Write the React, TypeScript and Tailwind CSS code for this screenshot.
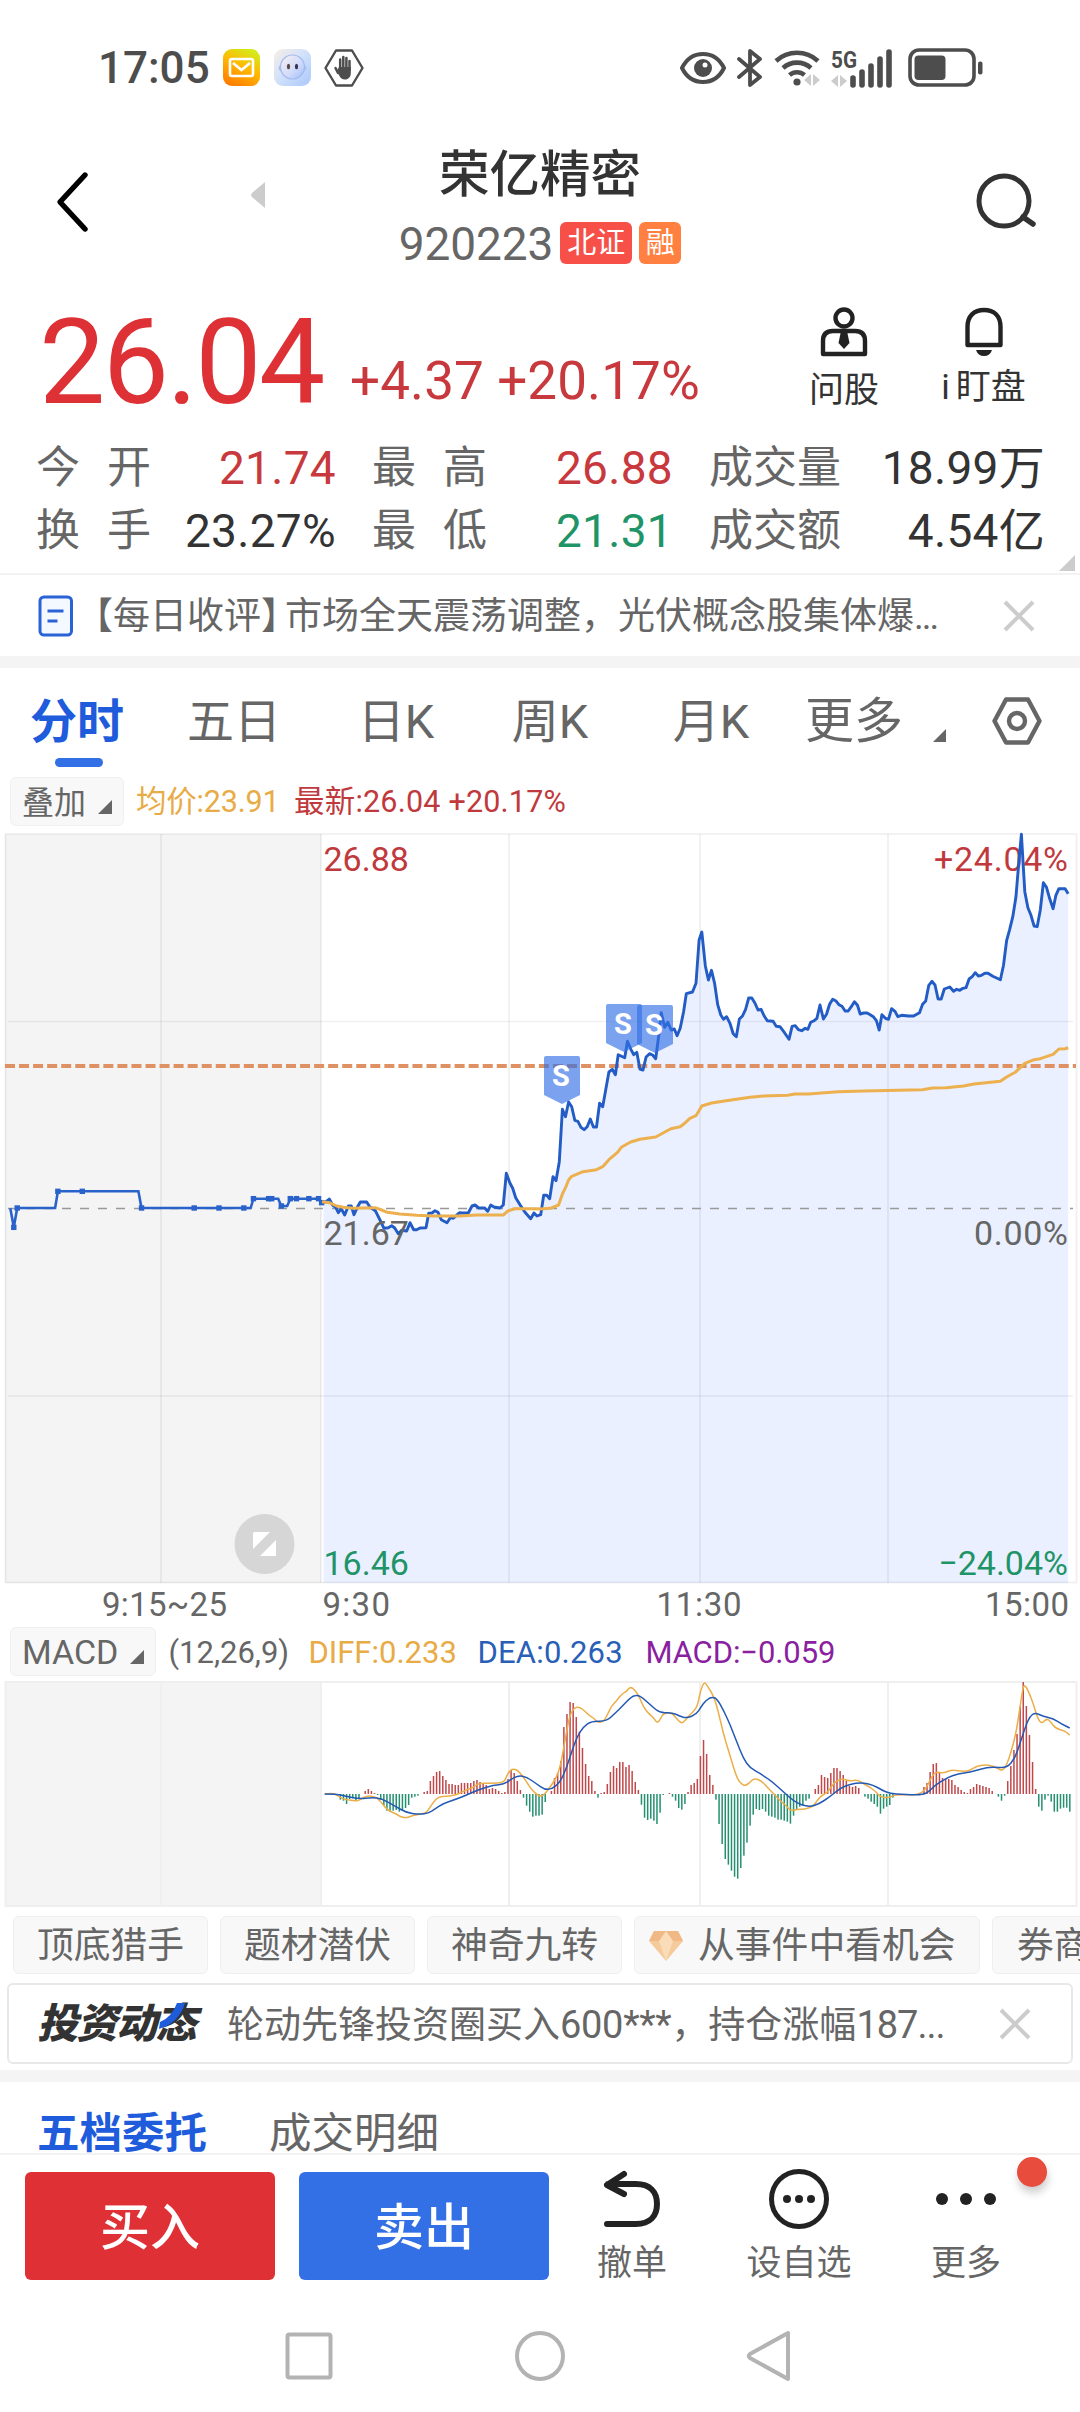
import type { ReactNode } from "react";

type Point = [number, number];

const place = (data: Point[], x0: number, y0: number, kx: number, ky: number): Point[] =>
  data.map(([x, y]) => [x0 + x / kx, y0 + y / ky]);

const line = (pts: Point[]) =>
  pts.map(([x, y], i) => `${i ? "L" : "M"}${x.toFixed(1)} ${y.toFixed(1)}`).join("");

// Quadratic curve through the midpoints
const smooth = (pts: Point[]) => {
  let d = `M${pts[0][0]} ${pts[0][1]}`;
  for (let i = 1; i < pts.length - 1; i++) {
    const mx = (pts[i][0] + pts[i + 1][0]) / 2;
    const my = (pts[i][1] + pts[i + 1][1]) / 2;
    d += `Q${pts[i][0].toFixed(1)} ${pts[i][1].toFixed(1)} ${mx.toFixed(1)} ${my.toFixed(1)}`;
  }
  const last = pts[pts.length - 1];
  return `${d}L${last[0].toFixed(1)} ${last[1].toFixed(1)}`;
};

const auction = place(
  [
    [30, 1165], [40, 1222], [50, 1164], [160, 1164], [168, 1114], [402, 1114], [411, 1164], [728, 1164],
    [736, 1136], [808, 1136], [817, 1158], [834, 1158], [843, 1136], [925, 1136], [934, 1148],
  ],
  0, 820, 2.904, 3
);

const auctionDots = place(
  [
    [40, 1222], [50, 1164], [168, 1114], [239, 1114], [411, 1164], [564, 1164], [636, 1164], [708, 1164],
    [736, 1136], [780, 1136], [789, 1136], [817, 1158], [843, 1136], [861, 1136], [897, 1136], [925, 1136], [934, 1148],
  ],
  0, 820, 2.904, 3
);

const price = [
  ...place(
    [
      [68, 248], [78, 245], [88, 237], [98, 256], [107, 262], [115, 278], [124, 266], [134, 285], [145, 258],
      [154, 258], [162, 284], [172, 262], [181, 246], [200, 246], [209, 260], [226, 272], [240, 300], [252, 325],
      [265, 323], [275, 317], [284, 324], [295, 341], [305, 331], [320, 333], [330, 308], [341, 329], [350, 329],
      [360, 324], [378, 323], [386, 280], [396, 279], [405, 272], [414, 277], [424, 299], [441, 308], [451, 293],
      [460, 295], [478, 278], [487, 279], [505, 279], [516, 258], [525, 255], [536, 264], [554, 264], [563, 274],
      [572, 255], [582, 261], [600, 264], [610, 255], [619, 160], [630, 190], [638, 205], [647, 233], [660, 254],
      [675, 277], [692, 296], [702, 279], [711, 288], [722, 284], [731, 226], [740, 226], [749, 236], [759, 170],
      [768, 182], [778, 125],
    ],
    300, 1120, 3, 3
  ),
  ...place(
    [
      [65, 868], [74, 890], [83, 846], [92, 860], [101, 901], [110, 904], [119, 922], [128, 929], [137, 920],
      [146, 897], [155, 921], [164, 921], [173, 850], [182, 860], [200, 756], [210, 748], [219, 764], [227, 704],
      [246, 713], [254, 664], [264, 688], [272, 704], [281, 697], [290, 747], [299, 750], [308, 711], [318, 701],
      [327, 705], [336, 716], [345, 645], [352, 578], [362, 622], [371, 607], [381, 630], [390, 627], [398, 647],
      [407, 625], [417, 575], [425, 521], [443, 516], [453, 490], [462, 360], [470, 336], [480, 437], [489, 480],
      [498, 451], [507, 490], [516, 554], [525, 585], [533, 598], [542, 590], [552, 611], [561, 641], [570, 650],
      [579, 597], [588, 588], [597, 568], [606, 534], [615, 534], [624, 549], [633, 570], [642, 568], [651, 588],
      [660, 602], [677, 604], [686, 619], [697, 620], [710, 638], [723, 658], [732, 619], [741, 617], [750, 629],
      [760, 632], [770, 625], [778, 628], [786, 607], [796, 602], [804, 595], [813, 555], [823, 597], [832, 583],
      [841, 553], [850, 538], [860, 543], [868, 554], [877, 559], [886, 573], [895, 573], [904, 560], [913, 545],
      [922, 556], [930, 582], [940, 579], [950, 579], [959, 584], [968, 590], [977, 602], [985, 630], [993, 584],
      [1003, 595], [1012, 598], [1021, 566], [1031, 574], [1039, 590], [1050, 586], [1070, 588], [1085, 588],
      [1102, 578], [1111, 553], [1120, 543], [1129, 496], [1138, 484], [1147, 495], [1156, 537], [1165, 537],
      [1174, 507], [1190, 501], [1201, 514], [1210, 508], [1219, 511], [1228, 505], [1237, 503], [1246, 477],
      [1255, 470], [1264, 458], [1273, 468], [1282, 466], [1292, 460], [1301, 460], [1315, 469], [1337, 479],
      [1346, 436], [1355, 362], [1364, 328], [1373, 290], [1382, 232], [1391, 120], [1398, 43], [1408, 215],
      [1417, 263], [1426, 286], [1435, 318], [1444, 320], [1453, 270], [1462, 188], [1471, 202], [1480, 235],
      [1490, 266], [1498, 227], [1507, 206], [1525, 206], [1534, 221],
    ],
    540, 820, 2.904, 3
  ),
];

const average = [
  ...place(
    [
      [66, 245], [88, 248], [110, 258], [130, 262], [160, 265], [225, 263], [245, 270], [262, 277], [300, 282],
      [350, 286], [400, 288], [480, 288], [530, 285], [610, 285], [625, 272], [645, 266], [690, 266],
    ],
    300, 1120, 3, 3
  ),
  ...place(
    [
      [0, 1167], [30, 1165], [54, 1155], [65, 1122], [74, 1103], [83, 1080], [92, 1069], [125, 1055], [164, 1049],
      [182, 1040], [200, 1019], [225, 997], [236, 982], [263, 966], [290, 958], [336, 951], [380, 926], [407, 920],
      [420, 910], [435, 895], [453, 887], [470, 858], [498, 849], [560, 839], [610, 832], [650, 828], [720, 826],
      [740, 822], [780, 822], [865, 815], [940, 813], [1040, 811], [1110, 809], [1140, 804], [1180, 803],
      [1230, 798], [1260, 792], [1337, 784], [1355, 771], [1380, 757], [1408, 730], [1435, 719], [1453, 716],
      [1490, 703], [1507, 687], [1525, 686], [1534, 683],
    ],
    540, 820, 2.904, 3
  ),
];

const macdBars = [
  0, 2, 0, -1, -3, -17, -20, -30, -15, -13, -20, -13, 0, 9, 15, 9, 3, -3, -17, -35, -50, -53, -50, -48, -53, -50,
  -42, -33, -11, -8, -5, 0, 6, 9, 39, 54, 66, 69, 54, 42, 30, 30, 27, 27, 33, 33, 33, 33, 39, 42, 36, 33, 27, 15,
  18, 15, 9, 3, 6, 45, 72, 63, 39, 12, -11, -35, -53, -68, -65, -65, -62, -24, 0, 9, 48, 63, 99, 201, 240, 276,
  273, 231, 187, 138, 90, 54, 39, 9, -11, 3, 6, 30, 66, 84, 78, 96, 96, 81, 87, 69, 36, 12, -32, -71, -78, -74,
  -80, -90, -56, -3, 0, 3, -8, -20, -42, -47, -30, 6, 27, 33, 45, 114, 162, 120, 57, 27, -17, -90, -150, -195,
  -212, -230, -248, -254, -222, -185, -146, -95, -62, -45, -48, -45, -53, -65, -68, -71, -77, -77, -80, -83, -89,
  -65, -45, -38, -35, -20, -14, 0, 15, 27, 57, 51, 48, 63, 78, 78, 69, 57, 40, 24, 21, 24, 18, 0, -8, -14, -23,
  -30, -38, -59, -44, -38, -33, -11, 0, 0, 0, 0, 0, 0, 0, 0, 0, 21, 33, 66, 90, 93, 66, 48, 45, 45, 42, 27, 21,
  12, 6, 3, 15, 21, 30, 27, 24, 21, 18, 9, 0, -8, -20, -5, 39, 84, 132, 180, 262, 336, 264, 177, 96, 15, -38,
  -50, -17, -5, -23, -53, -53, -44, -41, -41, -53,
];

const diff = [
  ...place(
    [
      [74, 372], [92, 369], [110, 374], [130, 388], [155, 390], [172, 394], [188, 384], [205, 377], [225, 380],
      [240, 392], [255, 412], [270, 424], [290, 432], [300, 440], [318, 444], [335, 438], [350, 434], [375, 430],
      [385, 420], [400, 397], [415, 380], [440, 379], [465, 376], [485, 367], [505, 357], [520, 352], [535, 340],
      [570, 340], [612, 338], [620, 318], [630, 301], [642, 296], [655, 302], [675, 328], [690, 352], [705, 370],
      [722, 380], [735, 372], [745, 357], [758, 340], [770, 320], [782, 285], [790, 240], [800, 182], [810, 135],
      [822, 114], [838, 110], [855, 124], [870, 138], [882, 145], [893, 158], [912, 154], [925, 128], [935, 108],
      [950, 92], [965, 72], [980, 64], [991, 50], [1005, 60], [1018, 80], [1030, 110], [1045, 130], [1060, 142],
      [1072, 160], [1082, 146], [1090, 130], [1115, 128], [1130, 146],
    ],
    300, 1670, 3, 3
  ),
  ...place(
    [
      [5, 161], [17, 150], [30, 134], [48, 117], [55, 95], [62, 60], [73, 34], [85, 52], [102, 80], [115, 125],
      [130, 190], [145, 240], [160, 290], [172, 326], [185, 343], [195, 347], [207, 340], [222, 324], [245, 333],
      [265, 355], [285, 375], [300, 392], [318, 406], [332, 423], [350, 418], [375, 418], [400, 408], [410, 394],
      [425, 376], [440, 370], [455, 348], [470, 332], [487, 326], [510, 334], [532, 329], [550, 341], [570, 352],
      [588, 365], [600, 381], [625, 384], [645, 374], [700, 375], [725, 370], [740, 352], [755, 320], [768, 305],
      [790, 310], [815, 299], [840, 304], [865, 304], [888, 289], [915, 284], [935, 287], [952, 294], [967, 303],
      [980, 285], [995, 240], [1010, 180], [1020, 110], [1030, 46], [1037, 48], [1048, 70], [1062, 108],
      [1072, 142], [1084, 162], [1100, 145], [1112, 155], [1127, 176], [1155, 182], [1169, 196],
    ],
    680, 1670, 3, 3
  ),
];

const dea = [
  ...place(
    [
      [74, 372], [110, 372], [140, 380], [180, 387], [215, 382], [245, 386], [280, 405], [320, 429], [360, 433],
      [385, 430], [405, 417], [430, 400], [470, 387], [500, 375], [540, 357], [580, 346], [612, 343], [630, 330],
      [655, 316], [680, 321], [710, 342], [735, 359], [755, 357], [780, 338], [800, 292], [815, 245], [830, 203],
      [850, 170], [875, 153], [920, 154], [945, 130], [970, 105], [995, 79], [1013, 75], [1030, 85], [1055, 108],
      [1080, 129], [1115, 127], [1140, 138],
    ],
    300, 1670, 3, 3
  ),
  ...place(
    [
      [20, 145], [50, 132], [62, 112], [78, 90], [98, 80], [112, 88], [130, 120], [150, 163], [170, 215],
      [190, 265], [210, 294], [245, 313], [280, 338], [310, 365], [340, 392], [365, 405], [390, 410], [415, 403],
      [450, 380], [480, 355], [510, 343], [545, 337], [580, 345], [605, 360], [630, 371], [670, 373], [715, 375],
      [740, 371], [765, 346], [800, 324], [835, 311], [870, 307], [905, 296], [935, 290], [980, 295], [1005, 265],
      [1020, 220], [1038, 165], [1050, 139], [1065, 128], [1090, 139], [1120, 146], [1145, 162], [1169, 174],
    ],
    680, 1670, 3, 3
  ),
];

const gridColumns = [161, 321, 509, 700, 888];

function StatusBar() {
  return (
    <div className="flex h-[135px] items-center pl-[98px] text-[#4d4d4d]">
      <span className="w-[125px] text-[44px] font-medium leading-none">17:05</span>
      <svg width="37" height="37" viewBox="0 0 37 37" className="shrink-0">
        <defs>
          <linearGradient id="mail" x1="0.2" y1="1" x2="0.7" y2="0">
            <stop offset="0" stopColor="#ff7a00" />
            <stop offset="0.55" stopColor="#ffb800" />
            <stop offset="1" stopColor="#d4ec1c" />
          </linearGradient>
        </defs>
        <rect width="37" height="37" rx="9" fill="url(#mail)" />
        <rect x="7" y="10" width="23" height="17" rx="2" fill="none" stroke="#fff" strokeWidth="2.6" />
        <path d="M10 14l8.500 7 8.500-7" fill="none" stroke="#fff" strokeWidth="2.600" />
      </svg>
      <svg width="37" height="37" viewBox="0 0 37 37" className="ml-[14px] shrink-0">
        <defs>
          <linearGradient id="bot" x1="0" y1="0" x2="1" y2="1">
            <stop offset="0" stopColor="#f8efe6" />
            <stop offset="0.5" stopColor="#cfe0fb" />
            <stop offset="1" stopColor="#a9c8fb" />
          </linearGradient>
          <linearGradient id="face" x1="0" y1="0" x2="1" y2="1">
            <stop offset="0" stopColor="#fbf1ee" />
            <stop offset="0.6" stopColor="#cfdafb" />
            <stop offset="1" stopColor="#9dbcf8" />
          </linearGradient>
        </defs>
        <rect width="37" height="37" rx="9" fill="url(#bot)" />
        <ellipse cx="18.500" cy="19" rx="14" ry="6" fill="#a9c0f2" />
        <circle cx="18.500" cy="18" r="12" fill="url(#face)" stroke="#a3b9f0" strokeWidth="1.200" />
        <ellipse cx="14.500" cy="17.500" rx="1.600" ry="2.800" fill="#5b4540" />
        <ellipse cx="22.500" cy="17.500" rx="1.600" ry="2.800" fill="#3b3550" />
      </svg>
      <svg width="40" height="38" viewBox="0 0 40 38" className="ml-[13px] shrink-0">
        <path d="M12 1.500h16l10.500 17.500L28 36.500H12L1.500 19z" fill="none" stroke="currentColor" strokeWidth="2.400" strokeLinejoin="round" />
        <path d="M16.200 20V10.500M19.300 19V8M22.400 19V9M25.500 21V12M14 24l-2.500-5" stroke="currentColor" strokeWidth="2.500" strokeLinecap="round" />
        <path d="M15 18h11.800v6.500c0 3.500-2.600 6-5.800 6-3 0-4.500-1.500-5.800-4l-2.400-4.500z" fill="currentColor" />
      </svg>
      <div className="ml-[316px] flex items-center">
        <svg width="46" height="32" viewBox="0 0 46 32">
          <path d="M2 16C7 6 14 2 23 2s16 4 21 14c-5 10-12 14-21 14S7 26 2 16z" fill="none" stroke="currentColor" strokeWidth="4" />
          <circle cx="23" cy="16" r="9" fill="currentColor" />
          <circle cx="25" cy="13" r="2.500" fill="#fff" />
        </svg>
        <svg width="28" height="38" viewBox="0 0 28 38" className="ml-[10px]">
          <path d="M3 10l21 18-10 8V2l10 8L3 28" fill="none" stroke="currentColor" strokeWidth="3.800" strokeLinejoin="round" strokeLinecap="round" />
        </svg>
        <svg width="48" height="39" viewBox="0 0 48 39" className="ml-[10px]">
          <path d="M2 13a31 31 0 0 1 42 0M9 20a21 21 0 0 1 28 0M15.500 27a11.500 11.500 0 0 1 15 0" fill="none" stroke="currentColor" strokeWidth="4.600" />
          <circle cx="23" cy="34" r="3.600" fill="currentColor" />
          <path d="M37 26v12l-7-6zM39 26v12l7-6z" fill="#ccc" />
        </svg>
        <svg width="64" height="40" viewBox="0 0 64 40" className="ml-[9px]">
          <text x="0" y="20" fontSize="24" fontWeight="700" fill="currentColor" textLength="26" lengthAdjust="spacingAndGlyphs">5G</text>
          <path d="M7 27v12l-7-6zM9 27v12l7-6z" fill="#ccc" />
          <path d="M22 30v7M31 24v13M40 18v19M49 11v26M58 4v33" stroke="currentColor" strokeWidth="5.600" strokeLinecap="round" />
        </svg>
        <svg width="76" height="40" viewBox="0 0 76 40" className="ml-[13px]">
          <rect x="2" y="2" width="64" height="35" rx="9" fill="none" stroke="currentColor" strokeWidth="3.600" />
          <rect x="6.500" y="7.500" width="31" height="24.500" rx="4" fill="currentColor" />
          <rect x="70" y="13.500" width="4.500" height="13" rx="2" fill="currentColor" />
        </svg>
      </div>
    </div>
  );
}

function Header() {
  return (
    <header className="flex h-[155px] items-start">
      <svg width="34" height="62" viewBox="0 0 34 62" className="ml-[55px] mt-[36px]">
        <path d="M30 4L5 31l25 27" fill="none" stroke="#000" strokeWidth="5.400" strokeLinecap="round" strokeLinejoin="round" />
      </svg>
      <svg width="15" height="26" viewBox="0 0 15 26" className="ml-[162px] mt-[47px]">
        <path d="M14 0v26L1 15q-2-2 0-4z" fill="#ccc" />
      </svg>
      <div className="ml-[114px] flex w-[320px] flex-col items-center">
        <h1 className="mt-[10px] text-[50.500px] font-medium leading-[60px] text-[#333]">荣亿精密</h1>
        <div className="mt-[13px] flex h-[50px] items-center gap-[7px]">
          <span className="pt-[2px] text-[46px] tracking-[-0.1px] text-[#666]">920223</span>
          <span className="flex h-[42px] w-[72px] items-center justify-center rounded-md bg-[#f65048] text-[29px] leading-none text-white">
            北证
          </span>
          <span className="flex h-[42px] w-[42px] items-center justify-center rounded-md bg-[#ff8040] text-[29px] leading-none text-white">
            融
          </span>
        </div>
      </div>
      <svg width="64" height="60" viewBox="0 0 64 60" className="ml-[275px] mt-[37px]">
        <circle cx="29" cy="29" r="25" fill="none" stroke="#333" strokeWidth="5" />
        <path d="M48 45l10 7" stroke="#333" strokeWidth="5.500" strokeLinecap="round" />
      </svg>
    </header>
  );
}

function Stat({ label, label2, value, tone }: { label: string; label2?: string; value: string; tone: string }) {
  return (
    <div className="flex pl-[36px]">
      <span>{label}</span>
      {label2 && <span className="ml-[27px]">{label2}</span>}
      <span className={`ml-auto text-[46px] tracking-[0.3px] whitespace-nowrap ${tone}`}>{value}</span>
    </div>
  );
}

function Quote() {
  return (
    <section className="h-[285px] border-b-2 border-[#f2f2f2]">
      <div className="flex h-[142px]">
        <div className="flex w-[770px] items-baseline pl-[39px] text-[#dd3135]">
          <span className="w-[311px] text-[118px] leading-[146px] tracking-[-2.5px]">26.04</span>
          <span className="relative -top-[4px] text-[53px] tracking-[0.1px] text-[#c8393d]">+4.37 +20.17%</span>
        </div>
        <div className="flex w-[148px] flex-col items-center pt-[17px]">
          <svg width="48" height="50" viewBox="0 0 48 50" className="shrink-0">
            <circle cx="24" cy="11" r="8.500" fill="none" stroke="#222" strokeWidth="4.400" />
            <path d="M3 47V34q0-10 10-10h22q10 0 10 10v13z" fill="none" stroke="#222" strokeWidth="4.400" strokeLinejoin="round" />
            <path d="M21 24h6l2.500 12-5.500 6-5.500-6z" fill="#222" />
          </svg>
          <span className="mt-[16px] text-[35px] leading-[36px] text-[#333]">问股</span>
        </div>
        <div className="flex w-[131px] flex-col items-center pt-[17px]">
          <svg width="42" height="50" viewBox="0 0 42 50" className="shrink-0">
            <path d="M4.500 38V20C4.500 9 11 3 21 3s16.500 6 16.500 17v18z" fill="none" stroke="#222" strokeWidth="4.400" strokeLinejoin="round" />
            <path d="M13 43h16q-2 6-8 6t-8-6z" fill="#222" />
          </svg>
          <span className="mt-[13px] text-[35px] leading-[36px] text-[#333]">
            <span className="mr-[6px]">i</span>盯盘
          </span>
        </div>
      </div>
      <div className="relative grid grid-cols-[336px_337px_372px] pt-[5px] text-[44px] leading-[63px] text-[#666]">
        <Stat label="今" label2="开" value="21.74" tone="text-[#c8393d]" />
        <Stat label="最" label2="高" value="26.88" tone="text-[#c8393d]" />
        <Stat label="成交量" value="18.99万" tone="text-[#333]" />
        <Stat label="换" label2="手" value="23.27%" tone="text-[#333]" />
        <Stat label="最" label2="低" value="21.31" tone="text-[#1f9467]" />
        <Stat label="成交额" value="4.54亿" tone="text-[#333]" />
        <svg width="16" height="16" viewBox="0 0 16 16" className="absolute right-[5px] bottom-[-8px]">
          <path d="M16 0v16H0z" fill="#ccc" />
        </svg>
      </div>
    </section>
  );
}

function Close() {
  return (
    <svg width="34" height="34" viewBox="0 0 34 34" className="shrink-0">
      <path d="M3 3l28 28M31 3L3 31" stroke="#ccc" strokeWidth="4" />
    </svg>
  );
}

function News() {
  return (
    <section className="flex h-[81px] items-center pl-[38px] text-[37px] text-[#666]">
      <svg width="36" height="42" viewBox="0 0 36 42" className="shrink-0">
        <rect x="2" y="2" width="31.500" height="38" rx="4" fill="#f4f8ff" stroke="#2a62d8" strokeWidth="3" />
        <path d="M9.500 16h16M9.500 26h10" stroke="#2a62d8" strokeWidth="3" />
      </svg>
      <p className="ml-[2px] w-[926px] pt-[1px] leading-none whitespace-nowrap">
        【每日收评<span className="tracking-[-13px]">】</span>市场全天震荡调整，光伏概念股集体爆
        <span className="tracking-[-2px]">...</span>
      </p>
      <Close />
    </section>
  );
}

function Tabs() {
  return (
    <nav className="flex h-[107px] text-[47px] leading-[108px] text-[#666]">
      <div className="flex w-[157px] flex-col items-center font-bold text-[#1e5cdb]">
        <span className="mr-[3px] h-[90px]">分时</span>
        <span className="h-[9px] w-[48px] rounded-full bg-[#3370e5]" />
      </div>
      <div className="w-[154px] text-center">五日</div>
      <div className="w-[170px] text-center">日K</div>
      <div className="w-[138px] text-center">周K</div>
      <div className="w-[184px] text-center">月K</div>
      <div className="flex w-[189px] pl-[2px]">
        <span className="w-[128px] text-[49px]">更多</span>
        <svg width="13" height="13" viewBox="0 0 13 13" className="mt-[61px]">
          <path d="M13 0v13H0z" fill="#666" />
        </svg>
      </div>
      <svg width="50" height="48" viewBox="0 0 50 48" className="mt-[29px]">
        <path d="M14 2.500h22L47.500 24 36 45.500H14L2.500 24z" fill="none" stroke="#666" strokeWidth="4.400" strokeLinejoin="round" />
        <circle cx="25" cy="24" r="8" fill="none" stroke="#666" strokeWidth="4.400" />
      </svg>
    </nav>
  );
}

function Picker({ children }: { children: ReactNode }) {
  return (
    <span className="flex h-[49px] items-center gap-[12px] rounded-md border border-[#f0f0f0] bg-[#f8f8f8] px-[11px] pt-[2px] text-[#666]">
      {children}
      <svg width="14" height="14" viewBox="0 0 14 14" className="mt-[9px]">
        <path d="M14 0v14H0z" fill="#666" />
      </svg>
    </span>
  );
}

function Flag({ x, y }: { x: number; y: number }) {
  return (
    <g>
      <path d={`M${x} ${y + 2}q0-2 2-2h32q2 0 2 2v37l-18 9-18-9z`} fill="#3370e5" opacity="0.65" />
      <text x={x + 17} y={y + 30} fontSize="29" fontWeight="700" textAnchor="middle" fill="#fff">S</text>
    </g>
  );
}

function PriceChart() {
  return (
    <svg width="1080" height="796" viewBox="0 828 1080 796" className="block" fontSize="34">
      <rect x="5" y="834" width="316" height="749" fill="#f4f4f4" />
      <path d={`${line(price)}V1583H323.500V1200z`} fill="#eaf0ff" />
      <g stroke="#000" strokeOpacity="0.06" strokeWidth="1.800" fill="none">
        <rect x="5.500" y="834" width="1071" height="748.500" />
        {gridColumns.map((x) => (
          <path key={x} d={`M${x} 834V1583`} />
        ))}
        <path d="M8 1021.500H1073M8 1396H1073" strokeWidth="1.300" />
      </g>
      <path d="M8 1208.500H1073" stroke="#999" strokeWidth="1.300" strokeDasharray="9 9" />
      <g fill="#c0393d">
        <text x="323.500" y="871">26.88</text>
        <text x="1068" y="871" textAnchor="end" textLength="134">+24.04%</text>
      </g>
      <path d="M5 1066H1076" stroke="#df9163" strokeWidth="3.800" strokeDasharray="10 4.050" />
      <path d={line(auction)} fill="none" stroke="#2a62cc" strokeWidth="2.600" />
      {auctionDots.map(([x, y], i) => (
        <rect key={i} x={x - 2.7} y={y - 2.7} width="5.4" height="5.4" fill="#2a62cc" />
      ))}
      <path d={line(price)} fill="none" stroke="#225cc4" strokeWidth="2.900" strokeLinejoin="round" />
      <path d={line(average)} fill="none" stroke="#ecb04e" strokeWidth="3" strokeLinejoin="round" />
      <Flag x={544} y={1056} />
      <Flag x={606} y={1004} />
      <Flag x={637} y={1005} />
      <g fill="#666">
        <text x="323.500" y="1245">21.67</text>
        <text x="1068" y="1245" textAnchor="end" textLength="94">0.00%</text>
        <g fontSize="33">
          <text x="102" y="1616" textLength="125">9:15~25</text>
          <text x="322.500" y="1616" textLength="67.500">9:30</text>
          <text x="699" y="1616" textAnchor="middle" textLength="85">11:30</text>
          <text x="1069" y="1616" textAnchor="end" textLength="84">15:00</text>
        </g>
      </g>
      <g fill="#1f9467">
        <text x="323.500" y="1575">16.46</text>
        <text x="1068" y="1575" textAnchor="end">−24.04%</text>
      </g>
      <circle cx="264.500" cy="1544" r="30" fill="#d6d6d6" />
      <path d="M254 1532h16l-17 17v-16zM276 1540v16h-16z" fill="#fff" />
    </svg>
  );
}

function MacdChart() {
  return (
    <svg width="1080" height="232" viewBox="0 1678 1080 232" className="block">
      <rect x="5" y="1682" width="316" height="224" fill="#f4f4f4" />
      <g stroke="#efefef" strokeWidth="2" fill="none">
        <rect x="5.500" y="1682" width="1071" height="224" />
        {gridColumns.map((x) => (
          <path key={x} d={`M${x} 1682V1906`} />
        ))}
      </g>
      {macdBars.map((v, i) => (
        <rect
          key={i}
          x={324.1 + i * 3.104}
          y={v > 0 ? 1794 - v / 3 : 1794}
          width="1.5"
          height={Math.abs(v) / 3}
          fill={v > 0 ? "#c0484a" : "#259070"}
        />
      ))}
      <path d={smooth(diff)} fill="none" stroke="#ecae48" strokeWidth="1.500" />
      <path d={smooth(dea)} fill="none" stroke="#2459b4" strokeWidth="1.500" />
    </svg>
  );
}

function Chip({ children }: { children: ReactNode }) {
  return (
    <span className="flex h-[58px] w-[195px] shrink-0 items-center justify-center rounded-md border border-[#efefef] bg-[#f8f8f8] pt-[2px] whitespace-nowrap">
      {children}
    </span>
  );
}

function Strategies() {
  return (
    <div className="flex h-[73px] gap-[12px] overflow-hidden pt-[6px] pl-[13px] text-[36.800px] leading-none text-[#666]">
      <Chip>顶底猎手</Chip>
      <Chip>题材潜伏</Chip>
      <Chip>神奇九转</Chip>
      <span className="flex h-[58px] w-[346px] shrink-0 items-center rounded-md border border-[#efefef] bg-[#f8f8f8] pt-[2px] pl-[14px] whitespace-nowrap">
        <svg width="34" height="30" viewBox="0 0 34 30" className="mr-[15px]">
          <path d="M5 0h24l5 10-17 20L0 10z" fill="#f6cb9c" />
          <path d="M5 0h24l5 10H0z" fill="#efb885" />
          <path d="M10 10L17 0l7 10-7 20z" fill="#fbdcb8" />
        </svg>
        从事件中看机会
      </span>
      <span className="flex h-[58px] w-[195px] shrink-0 items-center rounded-md border border-[#efefef] bg-[#f8f8f8] pt-[2px] pl-[24px] whitespace-nowrap">
        券商
      </span>
    </div>
  );
}

function Feed() {
  return (
    <div className="mx-[7px] flex h-[81px] items-center rounded-md border-2 border-[#e8e8e8] pl-[28px] text-[37px] leading-none text-[#666]">
      <span className="relative w-[190px] pt-[2px] text-[41px] font-black tracking-[-1.500px] whitespace-nowrap text-[#333] italic">
        投资动态
        <svg width="28" height="26" viewBox="0 0 28 26" className="absolute top-[1px] left-[122px]">
          <path d="M18 0h8Q20 20 0 26L1 19Q13 14 18 0z" fill="#1e5cdb" />
        </svg>
      </span>
      <p className="w-[771px] pt-[2px] whitespace-nowrap">
        轮动先锋投资圈买入<span className="text-[38px] tracking-[-0.3px]">600***</span>，持仓涨幅
        <span className="text-[38px] tracking-[-1px]">187...</span>
      </p>
      <Close />
    </div>
  );
}

function Action({ icon, label, className }: { icon: ReactNode; label: string; className: string }) {
  return (
    <div className={`flex flex-col items-center ${className}`}>
      <div className="flex h-[62px] items-center">{icon}</div>
      <span className="mt-[16px] text-[35px] leading-[36px] text-[#666]">{label}</span>
    </div>
  );
}

function TradeBar() {
  return (
    <div className="relative flex h-[147px] border-t-2 border-[#f2f2f2] bg-white pl-[25px]">
      <button className="mt-[17px] h-[108px] w-[250px] rounded-md bg-[#df3036] pt-[3px] text-[50px] font-medium leading-none text-white">买入</button>
      <button className="mt-[17px] ml-[24px] h-[108px] w-[250px] rounded-md bg-[#3370e5] pt-[3px] text-[50px] font-medium leading-none text-white">卖出</button>
      <Action
        className="ml-[18px] mt-[13px] w-[130px]"
        label="撤单"
        icon={
          <svg width="62" height="58" viewBox="0 0 62 58">
            <path d="M23 4L6 15l17 9M7 14h28c14 0 21 8 21 20s-7 20-21 20H6" fill="none" stroke="#222" strokeWidth="6" strokeLinecap="round" strokeLinejoin="round" />
          </svg>
        }
      />
      <Action
        className="ml-[32px] mt-[13px] w-[140px]"
        label="设自选"
        icon={
          <svg width="62" height="62" viewBox="0 0 62 62">
            <circle cx="31" cy="31" r="27.500" fill="none" stroke="#222" strokeWidth="5" />
            <circle cx="19" cy="31" r="4" fill="#222" />
            <circle cx="31" cy="31" r="4" fill="#222" />
            <circle cx="43" cy="31" r="4" fill="#222" />
          </svg>
        }
      />
      <Action
        className="ml-[37px] mt-[13px] w-[120px]"
        label="更多"
        icon={
          <svg width="62" height="14" viewBox="0 0 62 14">
            <circle cx="7" cy="7" r="6" fill="#222" />
            <circle cx="31" cy="7" r="6" fill="#222" />
            <circle cx="55" cy="7" r="6" fill="#222" />
          </svg>
        }
      />
      <span className="absolute top-[2px] left-[1017px] h-[30px] w-[30px] rounded-full bg-[#e74c3c] shadow-[1px_6px_8px_rgba(0,0,0,0.2)]" />
    </div>
  );
}

function SystemNav() {
  return (
    <div className="flex h-[111px] items-center pl-[285px]">
      <svg width="48" height="50" viewBox="0 0 48 50">
        <rect x="2.500" y="3.500" width="43" height="43" rx="2" fill="none" stroke="#b3b3b3" strokeWidth="4" />
      </svg>
      <svg width="52" height="52" viewBox="0 0 52 52" className="ml-[181px]">
        <circle cx="26" cy="26" r="23" fill="none" stroke="#b3b3b3" strokeWidth="4" />
      </svg>
      <svg width="48" height="54" viewBox="0 0 48 54" className="ml-[179px]">
        <path d="M43 4v46L5 29q-2.500-2 0-4z" fill="none" stroke="#b3b3b3" strokeWidth="4" strokeLinejoin="round" />
      </svg>
    </div>
  );
}

export default function App() {
  return (
    <div className="flex h-[2412px] w-[1080px] flex-col overflow-hidden bg-white font-['Roboto','Noto_Sans_CJK_SC',sans-serif]">
      <StatusBar />
      <Header />
      <Quote />
      <News />
      <div className="h-[12px] bg-[#f4f4f4]" />
      <Tabs />
      <div className="flex h-[53px] items-center pl-[10px] text-[30.500px] leading-none">
        <Picker>
          <span className="text-[32px]">叠加</span>
        </Picker>
        <span className="ml-[12px] w-[158px] pt-[2px] tracking-[-0.2px] text-[#e8ab45]">均价:23.91</span>
        <span className="pt-[2px] tracking-[0.2px] text-[#c0393d]">最新:26.04 +20.17%</span>
      </div>
      <PriceChart />
      <div className="flex h-[54px] items-center pl-[10px] text-[31px] leading-none">
        <Picker>
          <span className="text-[34px]">MACD</span>
        </Picker>
        <span className="ml-[12px] w-[140px] pt-[3px] text-[#666]">(12,26,9)</span>
        <span className="w-[169px] pt-[3px] text-[#e8ab45]">DIFF:0.233</span>
        <span className="w-[168px] pt-[3px] tracking-[0.2px] text-[#2a5fb8]">DEA:0.263</span>
        <span className="pt-[3px] tracking-[-0.1px] text-[#8a1fa0]">MACD:−0.059</span>
      </div>
      <MacdChart />
      <Strategies />
      <Feed />
      <div className="mt-[6px] h-[12px] bg-[#f4f4f4]" />
      <div className="flex h-[71px] gap-[62px] pt-[17px] pl-[37px] text-[42.500px] leading-[70px] text-[#666]">
        <span className="font-bold text-[#1e5cdb]">五档委托</span>
        <span>成交明细</span>
      </div>
      <TradeBar />
      <SystemNav />
    </div>
  );
}
